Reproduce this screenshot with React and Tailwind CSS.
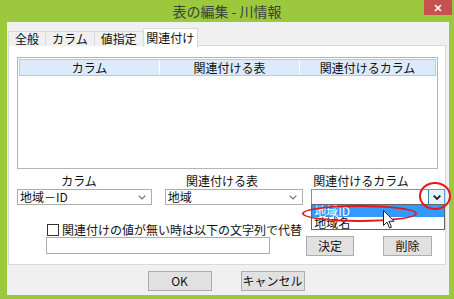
import React from 'react';

const Chevron = ({ color = '#707070', bold = false }) => (
  <svg width="8" height="5" viewBox="0 0 8 5">
    <path d="M0.7 0.7 L4 4 L7.3 0.7" fill="none" stroke={color} strokeWidth={bold ? 1.8 : 1.2} />
  </svg>
);

const Combo = ({ value, className }) => (
  <div className={`h-[16px] bg-white border border-[#abadb3] flex items-center justify-between pl-[2px] pr-[5px] ${className}`}>
    <span className="text-[12px] leading-[14px] text-[#111]">{value}</span>
    <Chevron />
  </div>
);

const Button = ({ label, className }) => (
  <button className={`h-[20px] bg-[#e1e1e1] border border-[#adadad] text-[12px] leading-[16px] text-[#111] flex items-center justify-center ${className}`}>
    {label}
  </button>
);

const tabs = ['全般', 'カラム', '値指定'];

export default function App() {
  return (
    <div className="w-[454px] h-[299px] bg-[#9bc83d] flex flex-col font-['Noto_Sans_CJK_JP','Liberation_Sans',sans-serif] overflow-hidden">
      {/* title bar */}
      <div className="h-[22px] relative flex items-center justify-center">
        <span className="text-[14px] leading-[18px] text-[#404040] -mt-[1px]">表の編集 - 川情報</span>
        <div className="absolute right-[2px] top-0 w-[28px] h-[15px] bg-[#c75050] flex items-center justify-center">
          <svg width="8" height="8" viewBox="0 0 8 8">
            <path d="M1 1 L7 7 M7 1 L1 7" stroke="white" strokeWidth="1.6" />
          </svg>
        </div>
      </div>

      {/* client area */}
      <div className="flex-1 ml-[7px] mr-[5px] mb-[4px] bg-[#f0f0f0] flex flex-col pl-[1px] pr-[3px]">
        {/* tabs */}
        <div className="h-[24px] pt-[5px] flex items-end relative z-10">
          {tabs.map((t) => (
            <div
              key={t}
              className="h-[15px] px-[6px] border border-b-0 border-[#d9d9d9] -mr-[1px] bg-[#f0f0f0] text-[12px] leading-[14px] text-[#111] flex items-center"
            >
              {t}
            </div>
          ))}
          <div className="h-[19px] w-[55px] border border-b-0 border-[#d9d9d9] bg-white text-[12px] leading-[14px] text-[#111] flex items-center justify-center -mb-[1px]">
            関連付け
          </div>
        </div>

        {/* panel */}
        <div className="h-[220px] bg-white border border-[#d9d9d9] -mt-[1px] flex flex-col">
          {/* list view */}
          <div className="ml-[8px] mt-[11px] w-[421px] h-[112px] border border-[#b5b5b5] p-[1px] bg-white">
            <div className="h-[17px] bg-[#dcebfc] border border-[#a9cdf2] flex text-[12px] leading-[14px] text-[#111]">
              <div className="w-[139px] flex items-center justify-center">カラム</div>
              <div className="w-[140px] border-l border-white flex items-center justify-center">関連付ける表</div>
              <div className="flex-1 border-l border-white flex items-center justify-center">関連付けるカラム</div>
            </div>
          </div>

          {/* labels */}
          <div className="mt-[5px] h-[14px] flex text-[12px] leading-[14px] text-[#111]">
            <div className="w-[140px] text-center">カラム</div>
            <div className="w-[146px] text-center">関連付ける表</div>
            <div className="w-[132px] text-center">関連付けるカラム</div>
          </div>

          {/* combos */}
          <div className="mt-[1px] flex items-start">
            <Combo value="地域－ID" className="ml-[8px] w-[135px]" />
            <Combo value="地域" className="ml-[13px] w-[139px]" />
            <div className="ml-[8px] w-[134px] h-[16px] relative">
              <div className="h-[16px] bg-white border border-[#569de5] flex justify-end">
                <div className="w-[16px] h-full bg-[#e5f1fb] border-l border-[#3c7fb1] flex items-center justify-center">
                  <Chevron color="#222" bold />
                </div>
              </div>
              {/* dropdown list */}
              <div className="absolute left-0 top-[15px] w-[134px] h-[26px] bg-white border border-[#646464] z-20">
                <div className="h-[12px] bg-[#3399ff] text-white text-[12px] leading-[12px] pl-[2px]">地域ID</div>
                <div className="h-[12px] text-[#111] text-[12px] leading-[12px] pl-[2px]">地域名</div>
              </div>
              {/* annotations */}
              <div className="absolute -left-[9px] top-[16px] w-[115px] h-[17px] rounded-[50%] border-2 border-[#e5171d] z-30" />
              <div className="absolute left-[108px] -top-[7px] w-[32px] h-[28px] rounded-[50%] border-2 border-[#e5171d] z-30" />
              <svg className="absolute left-[72px] top-[21px] z-40" width="12" height="19" viewBox="0 0 12 19">
                <path d="M0.5 0.5 L0.5 15.5 L4 12 L6.5 18 L8.5 17.2 L6 11.3 L11 11.3 Z" fill="white" stroke="#222" strokeWidth="1" />
              </svg>
            </div>
          </div>

          {/* checkbox row */}
          <div className="mt-[18px] ml-[38px] flex items-center h-[14px]">
            <div className="w-[12px] h-[12px] border border-[#333] bg-white" />
            <span className="ml-[3px] text-[12px] leading-[14px] text-[#111]">関連付けの値が無い時は以下の文字列で代替</span>
          </div>

          {/* input + buttons */}
          <div className="mt-[-1px] flex items-start">
            <div className="ml-[37px] mt-[1px] w-[224px] h-[17px] border border-[#abadb3] bg-white" />
            <Button label="決定" className="ml-[36px] w-[48px] h-[19px]" />
            <Button label="削除" className="ml-[29px] w-[49px] h-[19px]" />
          </div>
        </div>

        {/* footer */}
        <div className="mt-[6px] flex justify-center gap-[29px] pr-[2px]">
          <Button label="OK" className="w-[64px]" />
          <Button label="キャンセル" className="w-[64px]" />
        </div>
      </div>
    </div>
  );
}
